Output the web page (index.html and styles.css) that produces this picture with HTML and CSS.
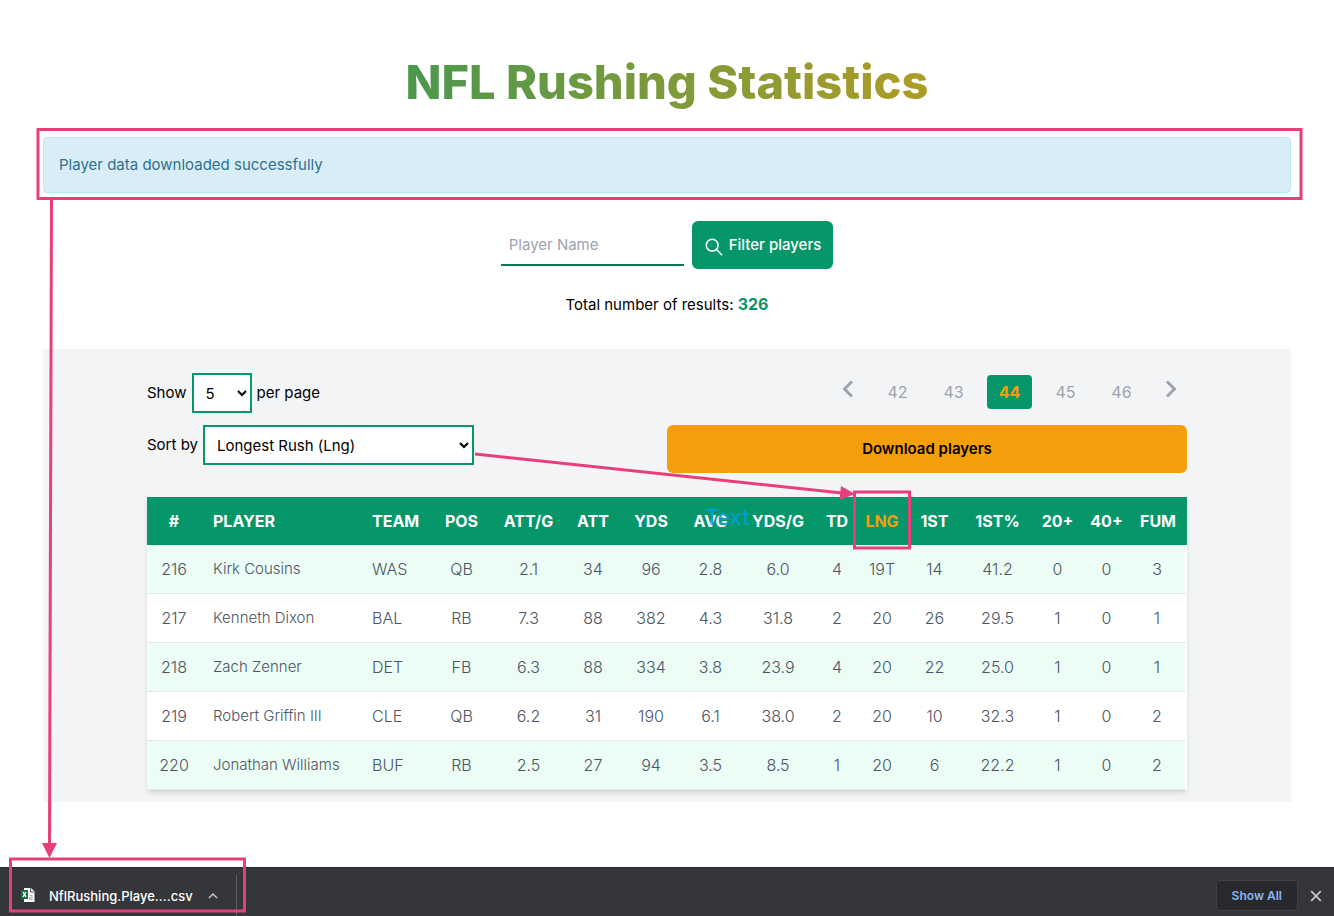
FILE: index.html
```html
<!DOCTYPE html>
<html lang="en">
<head>
<meta charset="utf-8">
<title>NFL Rushing Statistics</title>
<link rel="stylesheet" href="styles.css">
</head>
<body>
<main class="page">
  <h1 class="title">NFL Rushing Statistics</h1>
  <p class="alert" role="alert">Player data downloaded successfully</p>
  <form class="filter">
    <input class="filter-input" type="text" placeholder="Player Name" aria-label="Player Name">
    <button class="filter-button" type="button">
      <svg class="icon-search" viewBox="0 0 18 18" aria-hidden="true"><circle cx="7.2" cy="7.2" r="5.9"/><path d="M11.5 11.5l5.2 5.2"/></svg>
      Filter players
    </button>
  </form>
  <p class="total">Total number of results: <strong class="total-count">326</strong></p>
  <section class="panel">
    <div class="controls">
      <div class="options">
        <div class="option"><label for="size">Show</label><select class="select select-size" id="size"><option>5</option></select><span>per page</span></div>
        <div class="option"><label for="sort">Sort by</label><select class="select select-sort" id="sort"><option>Longest Rush (Lng)</option></select></div>
      </div>
      <div class="actions">
        <nav class="pager" aria-label="Pagination">
          <a class="arrow" href="#" aria-label="Previous"><svg class="icon-arrow" viewBox="0 0 12 18"><path d="M10 1.500L2.500 9l7.500 7.500"/></svg></a>
          <a class="page-link" href="#">42</a>
          <a class="page-link" href="#">43</a>
          <a class="page-link current" href="#" aria-current="page">44</a>
          <a class="page-link" href="#">45</a>
          <a class="page-link" href="#">46</a>
          <a class="arrow" href="#" aria-label="Next"><svg class="icon-arrow" viewBox="0 0 12 18"><path d="M2 1.500L9.500 9 2 16.500"/></svg></a>
        </nav>
        <button class="download" type="button">Download players</button>
      </div>
    </div>
    <table class="stats">
      <colgroup><col class="w54"><col class="w159"><col class="w70"><col class="w63"><col class="w71"><col class="w58"><col class="w58"><col class="w61"><col class="w74"><col class="w44"><col class="w46"><col class="w59"><col class="w67"><col class="w53"><col class="w45"><col class="w58"></colgroup>
      <thead><tr><th>#</th><th class="left">PLAYER</th><th class="left">TEAM</th><th>POS</th><th>ATT/G</th><th>ATT</th><th>YDS</th><th>AVG</th><th>YDS/G</th><th>TD</th><th class="sorted">LNG</th><th>1ST</th><th>1ST%</th><th>20+</th><th>40+</th><th>FUM</th></tr></thead>
      <tbody>
        <tr><td>216</td><td class="left name">Kirk Cousins</td><td class="left">WAS</td><td>QB</td><td>2.1</td><td>34</td><td>96</td><td>2.8</td><td>6.0</td><td>4</td><td>19T</td><td>14</td><td>41.2</td><td>0</td><td>0</td><td>3</td></tr>
        <tr><td>217</td><td class="left name">Kenneth Dixon</td><td class="left">BAL</td><td>RB</td><td>7.3</td><td>88</td><td>382</td><td>4.3</td><td>31.8</td><td>2</td><td>20</td><td>26</td><td>29.5</td><td>1</td><td>0</td><td>1</td></tr>
        <tr><td>218</td><td class="left name">Zach Zenner</td><td class="left">DET</td><td>FB</td><td>6.3</td><td>88</td><td>334</td><td>3.8</td><td>23.9</td><td>4</td><td>20</td><td>22</td><td>25.0</td><td>1</td><td>0</td><td>1</td></tr>
        <tr><td>219</td><td class="left name">Robert Griffin III</td><td class="left">CLE</td><td>QB</td><td>6.2</td><td>31</td><td>190</td><td>6.1</td><td>38.0</td><td>2</td><td>20</td><td>10</td><td>32.3</td><td>1</td><td>0</td><td>2</td></tr>
        <tr><td>220</td><td class="left name">Jonathan Williams</td><td class="left">BUF</td><td>RB</td><td>2.5</td><td>27</td><td>94</td><td>3.5</td><td>8.5</td><td>1</td><td>20</td><td>6</td><td>22.2</td><td>1</td><td>0</td><td>2</td></tr>
      </tbody>
    </table>
  </section>
</main>
<footer class="shelf">
  <div class="file">
    <svg class="icon-file" viewBox="0 0 14 16" aria-hidden="true"><path d="M3 1h7l3.500 3.500V15H3z" fill="#fff"/><path d="M9.500 1v4h4" fill="none" stroke="#55575b"/><path d="M0 3h7v9H0z" fill="#1d7044"/><path d="M2 5l3 5M5 5l-3 5" stroke="#fff" stroke-width="1.300"/><path d="M8.500 8.500h2.500v4H8.500v-2h2M12 13.500v-1" fill="none" stroke="#999" stroke-width=".8"/></svg>
    <span class="file-name">NflRushing.Playe....csv</span>
    <button class="icon-button" type="button" aria-label="File menu"><svg class="icon-caret" viewBox="0 0 10 6"><path d="M1 5l4-4 4 4"/></svg></button>
  </div>
  <div class="shelf-end">
    <button class="show-all" type="button">Show All</button>
    <button class="icon-button" type="button" aria-label="Close"><svg class="icon-close" viewBox="0 0 10 10"><path d="M1 1l8 8M9 1L1 9"/></svg></button>
  </div>
</footer>
<svg class="notes" width="1334" height="916" viewBox="0 0 1334 916">
  <g class="note-lines">
    <rect x="38" y="129.500" width="1263" height="69"/>
    <rect x="10.500" y="859" width="234" height="52"/>
    <rect x="854.500" y="492" width="55" height="56"/>
    <path d="M51.500 199L49.500 844"/>
    <path d="M475 454L842 493"/>
  </g>
  <path class="note-heads" d="M42 843h15l-7.500 15zM841 486l14 8-15.500 6z"/>
  <text class="note-text" x="705" y="525">Text</text>
</svg>
</body>
</html>
```
FILE: styles.css
```css
* { box-sizing: border-box; }
body {
  margin: 0;
  min-height: 100vh;
  display: flex;
  flex-direction: column;
  position: relative;
  background: #fff;
  color: #000;
  font: 15px/24px Inter, "Liberation Sans", sans-serif;
}
button, input, select { font: inherit; color: inherit; }
button { border: 0; cursor: pointer; }
a { color: inherit; text-decoration: none; }
.page { flex: 1; padding: 54px 43px 0; }
.title {
  margin: 0 0 27px;
  text-align: center;
  font-size: 47px;
  line-height: 56px;
  font-weight: 800;
  background: linear-gradient(to right, #059669, #f59e0b);
  -webkit-background-clip: text;
  background-clip: text;
  color: transparent;
}
.alert {
  margin: 0 0 28px;
  padding: 15px;
  border: 1px solid #bce8f1;
  border-radius: 4px;
  background: #d9edf7;
  color: #31708f;
}
.filter { display: flex; justify-content: center; gap: 8px; }
.filter-input {
  width: 183px;
  height: 42px;
  margin-top: 3px;
  padding: 0 8px;
  border: 0;
  border-bottom: 2px solid #047857;
  background: transparent;
}
.filter-input::placeholder { color: #9ca3af; }
.filter-button {
  display: flex;
  align-items: center;
  gap: 6px;
  height: 48px;
  padding: 0 12px 0 13px;
  border-radius: 6px;
  background: #059669;
  color: #fff;
  font-weight: 500;
}
.icon-search { width: 18px; height: 18px; margin-top: 3px; fill: none; stroke: #fff; stroke-width: 1.5; stroke-linecap: round; }
.total { margin: 24px 0 32px; text-align: center; }
.total-count { color: #059669; font-size: 16px; line-height: 16px; font-weight: 700; }
.panel { padding: 24px 104px 12px; background: #f3f4f6; }
.controls { display: grid; grid-template-columns: 1fr 1fr; margin-bottom: 24px; }
.options { display: flex; flex-direction: column; gap: 12px; }
.option { display: flex; align-items: center; gap: 5px; }
.select { height: 40px; padding: 0 0 0 8px; border: 2px solid #059669; border-radius: 0; background: #fff; }
.select-size { width: 60px; }
.select-sort { width: 271px; }
.actions { display: flex; flex-direction: column; gap: 16px; }
.pager { display: flex; justify-content: flex-end; align-items: center; gap: 11px; margin-top: 2px; color: #9ca3af; font-size: 16px; }
.page-link { width: 45px; line-height: 34px; border-radius: 4px; text-align: center; }
.current { background: #059669; color: #f59e0b; font-weight: 700; }
.arrow { display: flex; padding: 0 10px 6px; }
.icon-arrow { width: 12px; height: 18px; fill: none; stroke: #9ca3af; stroke-width: 3; }
.download { height: 48px; border-radius: 6px; background: #f59e0b; font-weight: 600; }
.stats {
  width: 100%;
  table-layout: fixed;
  border-spacing: 0;
  background: #fff;
  color: #4b5563;
  font-size: 16px;
  font-weight: 300;
  text-align: center;
  box-shadow: 0 4px 6px -1px rgba(0, 0, 0, .1), 0 2px 4px -1px rgba(0, 0, 0, .06);
}
.stats th, .stats td { height: 48px; padding: 0; }
.stats th { background: #059669; color: #fff; font-weight: 700; }
.stats td { height: 49px; border-bottom: 1px solid #e5e7eb; }
.stats tbody tr:nth-child(odd) { background: #ecfdf5; }
.stats tbody td:last-child { border-right: 2px solid #fff; }
.stats .left { padding-left: 12px; text-align: left; }
.stats .name { font-size: 15px; }
.stats .sorted { color: #f59e0b; }
.w44 { width: 44px; }
.w45 { width: 45px; }
.w46 { width: 46px; }
.w53 { width: 53px; }
.w54 { width: 54px; }
.w58 { width: 58px; }
.w59 { width: 59px; }
.w61 { width: 61px; }
.w63 { width: 63px; }
.w67 { width: 67px; }
.w70 { width: 70px; }
.w71 { width: 71px; }
.w74 { width: 74px; }
.w159 { width: 159px; }
.shelf {
  display: flex;
  justify-content: space-between;
  height: 49px;
  padding: 7px 4px 0 21px;
  border-top: 1px solid #27282b;
  background: #35363a;
  color: #fff;
  font-size: 13px;
  font-weight: 500;
}
.file { display: flex; align-items: center; padding-right: 10px; border-right: 1px solid #5f6064; }
.icon-file { width: 14px; height: 16px; margin: 0 14px 2px 0; }
.file-name { margin-top: 1px; margin-right: 7px; }
.icon-button { display: flex; padding: 8px; background: none; }
.icon-caret { width: 10px; height: 6px; }
.icon-close { width: 12px; height: 12px; }
.icon-caret, .icon-close { fill: none; stroke: #c4c6c9; stroke-width: 1.5; }
.shelf-end { display: flex; align-items: center; gap: 4px; }
.show-all { height: 31px; padding: 0 15px; border: 1px solid #3f4044; border-radius: 4px; background: #28292c; color: #8ab4f8; font-size: 12px; font-weight: 600; }
.notes { position: absolute; top: 0; left: 0; pointer-events: none; }
.note-lines { fill: none; stroke: #e83e7c; stroke-width: 3; }
.note-heads { fill: #e83e7c; }
.note-text { fill: #00a0d8; font-size: 22px; }
```
